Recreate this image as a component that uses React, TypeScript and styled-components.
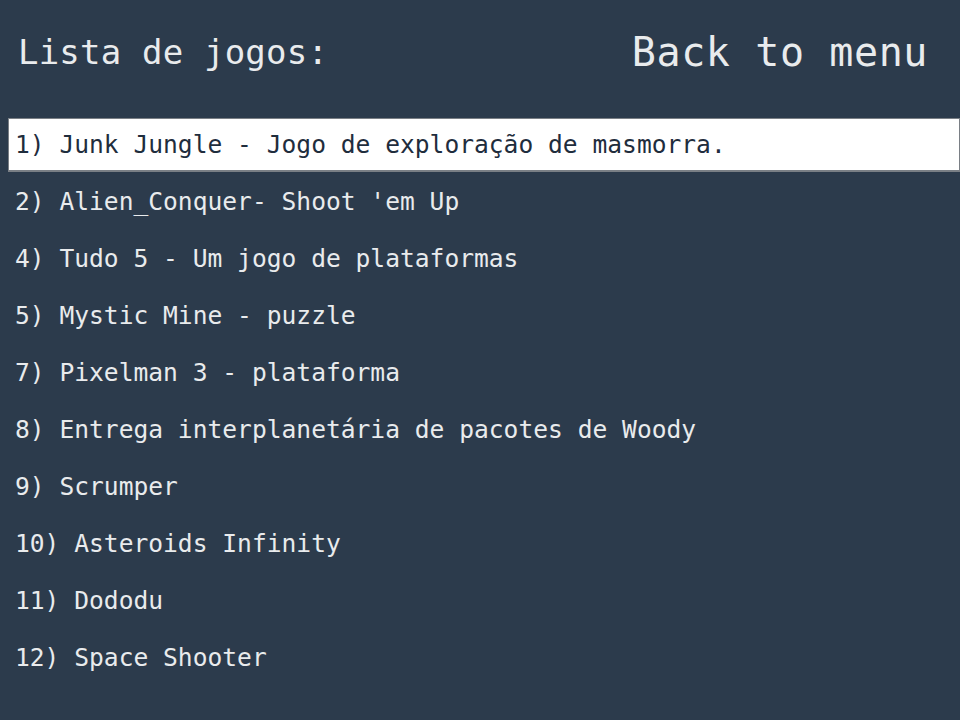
import React from "react";
import styled, { createGlobalStyle } from "styled-components";

const Global = createGlobalStyle`
  html, body {
    margin: 0;
    padding: 0;
    background: #2c3b4c;
  }
  body {
    font-family: "DejaVu Sans Mono", "Liberation Mono", monospace;
  }
`;

const Page = styled.div`
  width: 960px;
  height: 720px;
  background: #2c3b4c;
  color: #e9ebed;
  overflow: hidden;
`;

const Header = styled.header`
  height: 104px;
  display: flex;
  align-items: center;
  justify-content: space-between;
  padding: 0 32px 0 18px;
  box-sizing: border-box;
`;

const Title = styled.h1`
  margin: 0;
  font-size: 34px;
  font-weight: normal;
  letter-spacing: 0.2px;
`;

const BackButton = styled.button`
  background: none;
  border: none;
  padding: 0;
  color: #e9ebed;
  font-family: inherit;
  font-size: 40px;
  letter-spacing: 0.6px;
  cursor: pointer;
`;

const List = styled.ul`
  list-style: none;
  margin: 0;
  padding: 14px 0 0 8px;
  display: flex;
  flex-direction: column;
  gap: 3px;
`;

const Row = styled.li<{ $selected?: boolean }>`
  height: 54px;
  box-sizing: border-box;
  display: flex;
  align-items: center;
  padding-left: 6px;
  font-size: 24.6px;
  white-space: pre;
  border: 1px solid ${(p) => (p.$selected ? "#7a7f85" : "transparent")};
  border-bottom-width: 2px;
  background: ${(p) => (p.$selected ? "#ffffff" : "transparent")};
  color: ${(p) => (p.$selected ? "#1f2d3d" : "#e9ebed")};
`;

const games = [
  "1) Junk Jungle - Jogo de exploração de masmorra.",
  "2) Alien_Conquer- Shoot 'em Up",
  "4) Tudo 5 - Um jogo de plataformas",
  "5) Mystic Mine - puzzle",
  "7) Pixelman 3 - plataforma",
  "8) Entrega interplanetária de pacotes de Woody",
  "9) Scrumper",
  "10) Asteroids Infinity",
  "11) Dododu",
  "12) Space Shooter",
];

export default function App() {
  return (
    <Page>
      <Global />
      <Header>
        <Title>Lista de jogos:</Title>
        <BackButton>Back to menu</BackButton>
      </Header>
      <List>
        {games.map((g, i) => (
          <Row key={g} $selected={i === 0}>
            {g}
          </Row>
        ))}
      </List>
    </Page>
  );
}
